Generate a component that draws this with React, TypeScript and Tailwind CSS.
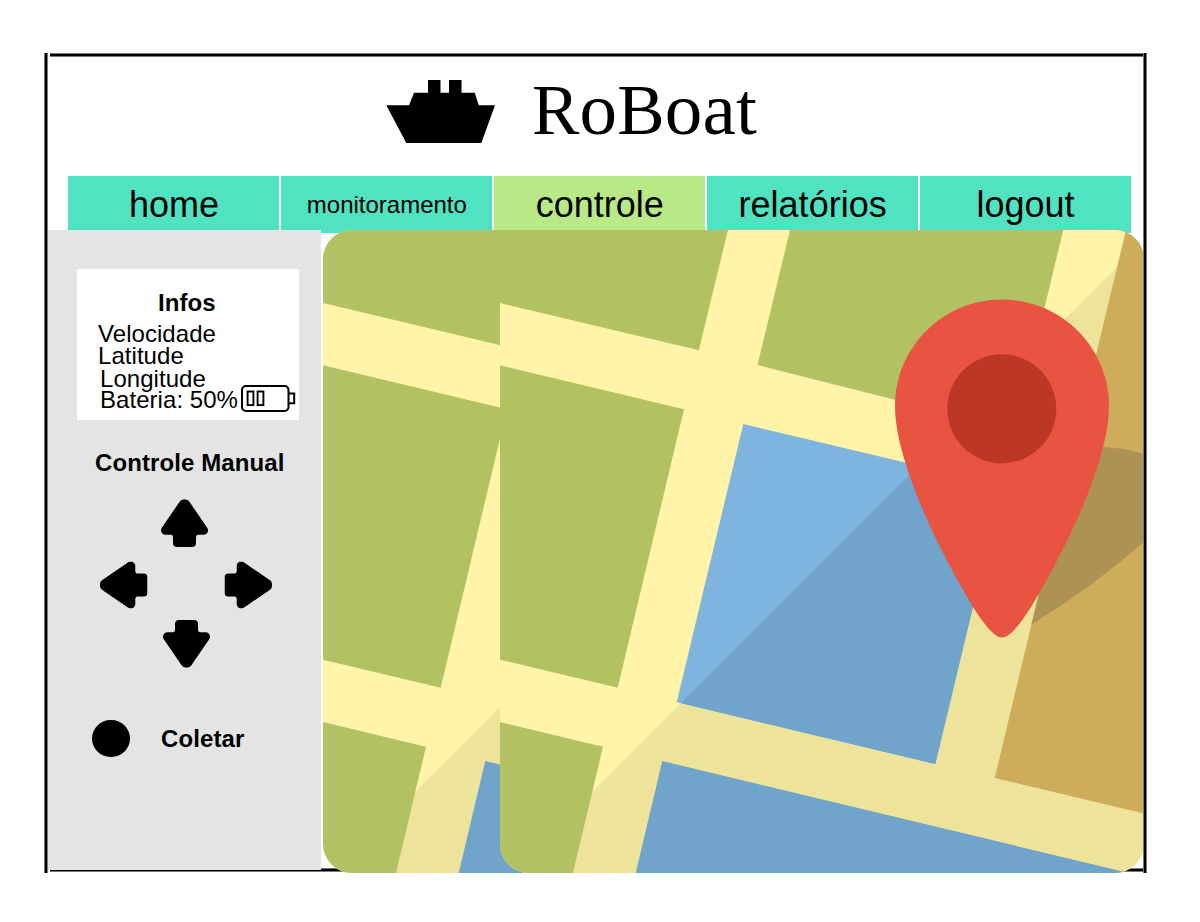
import React from "react";

const tabs = [
  { label: "home", size: "text-[36px]", color: "bg-[#50e3c2]" },
  { label: "monitoramento", size: "text-[24px]", color: "bg-[#50e3c2]" },
  { label: "controle", size: "text-[36px]", color: "bg-[#b8e986]" },
  { label: "relatórios", size: "text-[36px]", color: "bg-[#50e3c2]" },
  { label: "logout", size: "text-[36px]", color: "bg-[#50e3c2]" },
];

function Ship() {
  return (
    <svg className="h-[63px] w-[109px]" viewBox="386 80 109 63" aria-hidden="true">
      <path d="M386.3 105.3H409L414 92.7H428V80H440.5V92.7H449V80H461.5V92.7H474.7L478.8 105.3H495L481.3 143H406.3Z" />
    </svg>
  );
}

function Battery() {
  return (
    <svg className="ml-[2px] h-[28px] w-[56px] shrink-0" viewBox="240 384 56 28" fill="none" stroke="#000" strokeWidth="2" aria-hidden="true">
      <rect x="242" y="386" width="46.5" height="25" rx="4" />
      <path d="M289 393.5H294.2V403.3H289" />
      <rect x="247.6" y="391.5" width="5.8" height="13.6" strokeWidth="1.9" />
      <rect x="257.6" y="391.5" width="5.8" height="13.6" strokeWidth="1.9" />
    </svg>
  );
}

function Arrow({ className }: { className: string }) {
  return (
    <svg viewBox="0 0 47 48" className={"h-[48px] w-[47px] " + className} aria-hidden="true">
      <path d="M22.5 5H24.5L42.5 31.3H4.5Z" stroke="#000" strokeWidth="9" strokeLinejoin="round" />
      <path d="M10.5 34V36Q12 36 12 38V44Q12 48 16 48H31Q35 48 35 44V38Q35 36 36.5 36V34Z" />
    </svg>
  );
}

function Streets() {
  return (
    <g>
      <rect x="500" y="230" width="644" height="643" fill="#fff4a8" />
      <path d="M511 873L1154 230V873Z" fill="#eee39b" />
      <g fill="#b2c262">
        <path d="M500 230H728L698.8 350.3L500 303Z" />
        <path d="M790 230H1063.3L1015 430L757.5 365Z" />
        <path d="M500 365.3L684 409.3L617.7 687.7L500 659.7Z" />
        <path d="M500 722L603 746.7L573 873H500Z" />
      </g>
      <path d="M743.3 424L1002 485.5L935.3 764L676.7 702.3Z" fill="#7eb4de" />
      <path d="M680.9 703.1L920 464L1002 485.5L935.3 764Z" fill="#70a4ca" />
      <path d="M662.3 761L1129 873H635.7Z" fill="#70a4ca" />
      <path d="M1126 230H1144V813.5L994.7 778L1096.5 353Z" fill="#cead5a" />
      <path d="M1075 448Q1110 444 1144 454V541.5Q1093 587 1031.5 624.5L1039 593Z" fill="#ac9355" />
      <path d="M1002 299.5C943 299.5 895 347 895 406C895 461 939 551 973 607C984 624 994 637.5 1002 637.5C1010 637.5 1020 624 1031 607C1065 551 1109 461 1109 406C1109 347 1061 299.5 1002 299.5Z" fill="#e95442" />
      <circle cx="1001.8" cy="408.8" r="54.5" fill="#bc3726" />
    </g>
  );
}

function StreetMap() {
  return (
    <svg className="ml-[2px] h-[643px] w-[821px] shrink-0" viewBox="323 230 821 643" role="img" aria-label="Mapa">
      <defs>
        <clipPath id="tile-back">
          <rect x="500" y="230" width="644" height="643" rx="29" />
        </clipPath>
        <clipPath id="tile-front">
          <path d="M500 230H1115A29 29 0 0 1 1144 259V844A29 29 0 0 1 1115 873H529A29 29 0 0 1 500 844Z" />
        </clipPath>
      </defs>
      <g clipPath="url(#tile-back)" transform="translate(-177 0)">
        <Streets />
      </g>
      <g clipPath="url(#tile-front)">
        <Streets />
      </g>
    </svg>
  );
}

export default function App() {
  return (
    <main className="h-[922px] w-[1200px] bg-white pt-[53px] pl-[44px] font-['Liberation_Sans',sans-serif] text-black">
      <div className="flex h-[820px] w-[1103px]">
        <div className="w-[4px] shrink-0 border-x border-[#777] bg-black" />
        <div className="flex w-[1096px] shrink-0 flex-col">
          <div className="ml-[2px] h-[4px] w-[1094px] shrink-0 border-y border-[#777] bg-black" />
          <header className="flex h-[119px] shrink-0 pt-[23px] pl-[338px]">
            <Ship />
            <h1 className="ml-[37px] font-['Liberation_Serif',serif] text-[71px] leading-[58px] tracking-[0.2px] whitespace-nowrap">
              R<span className="text-[75px]">o</span>B<span className="text-[75px]">oat</span>
            </h1>
          </header>
          <nav className="ml-[20px] grid h-[57px] w-[1062.9px] shrink-0 grid-cols-5 gap-[1.6px]">
            {tabs.map((tab) => (
              <a key={tab.label} className={"flex items-center justify-center pt-px pl-[0.6px] " + tab.size + " " + tab.color}>
                {tab.label}
              </a>
            ))}
          </nav>
          <div className="relative z-10 -mt-[3px] flex h-[643px] shrink-0">
            <aside className="h-[640px] w-[273px] shrink-0 bg-[#e4e4e4] pt-[39px] pl-[29px]">
              <section className="h-[151px] w-[222px] bg-white pt-[20px] text-[24px] tracking-[0.05px] whitespace-nowrap">
                <h2 className="pl-[81px] leading-[28px] font-bold">Infos</h2>
                <p className="mt-[4px] pl-[21px] leading-[25px]">Velocidade</p>
                <p className="pl-[21px] leading-[19px]">Latitude</p>
                <p className="pl-[23px] leading-[27px]">Longitude</p>
                <div className="-mt-[8px] flex pl-[23px]">
                  <p className="w-[138px] leading-[32px]">Bateria: 50%</p>
                  <Battery />
                </div>
              </section>
              <h2 className="mt-[29px] pl-[18px] text-[24px] leading-[28px] font-bold tracking-[0.1px] whitespace-nowrap">Controle Manual</h2>
              <div className="mt-[22px] ml-[23px] grid w-[172px] grid-cols-[47px_47px_47px] gap-x-[15.5px]">
                <Arrow className="col-start-2 -ml-[1.5px]" />
                <Arrow className="col-start-1 row-start-2 mt-[14px] -rotate-90" />
                <Arrow className="col-start-3 row-start-2 mt-[14px] rotate-90" />
                <Arrow className="col-start-2 row-start-3 mt-[11px] rotate-180" />
              </div>
              <div className="mt-[52px] flex items-center pl-[15px]">
                <button aria-label="Coletar" className="h-[37px] w-[37.5px] rounded-full bg-black" />
                <span className="ml-[31.5px] text-[24px] leading-[28px] font-bold tracking-[0.1px]">Coletar</span>
              </div>
            </aside>
            <StreetMap />
          </div>
          <div className="-mt-[5px] ml-[2px] h-[4px] w-[1094px] shrink-0 border-y border-[#777] bg-black" />
        </div>
        <div className="relative z-20 -ml-px w-[4px] shrink-0 border-x border-[#777] bg-black" />
      </div>
    </main>
  );
}
